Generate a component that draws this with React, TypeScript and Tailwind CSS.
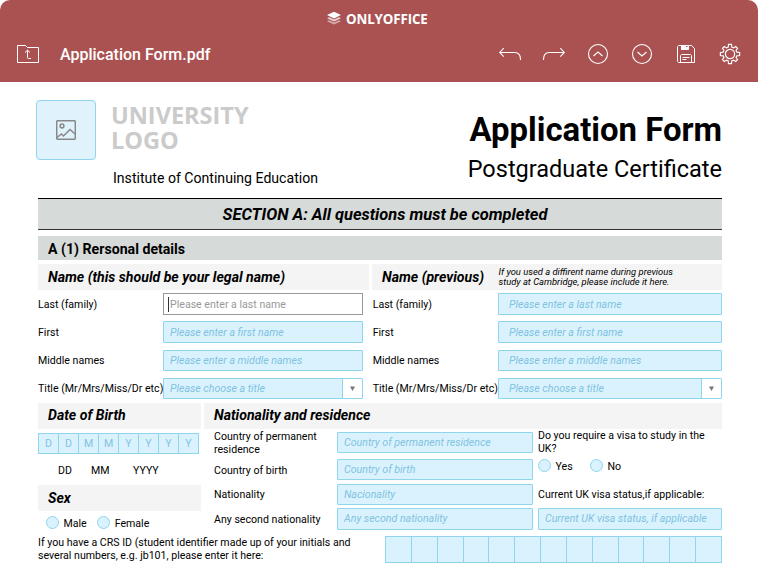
import React from "react";

const field = "border border-[#8fd5ec] bg-[#daf2fe] text-[#7fc3de] italic flex items-center whitespace-nowrap text-[10.6px] rounded-[1px]";

function Input({ text, className = "" }: { text: string; className?: string }) {
  return <div className={`${field} h-[21.5px] ${className}`}>{text}</div>;
}

function Select({ text, className = "" }: { text: string; className?: string }) {
  return (
    <div className={`${field} h-[21.5px] ${className}`}>
      <span>{text}</span>
      <span className="ml-auto flex h-full w-5 items-center justify-center border-l border-[#8fd5ec] bg-white">
        <svg width="5" height="5" viewBox="0 0 5 5"><path d="M0 .5h5L2.500 5z" fill="#777" /></svg>
      </span>
    </div>
  );
}

function Bar({ children, className = "" }: { children?: React.ReactNode; className?: string }) {
  return (
    <div className={`flex h-[26px] items-center bg-[#f4f4f4] pl-[10px] text-[14.1px] font-bold italic whitespace-nowrap ${className}`}>
      {children}
    </div>
  );
}

function Radio({ label, className = "" }: { label: string; className?: string }) {
  return (
    <div className={`flex items-center ${className}`}>
      <span className="h-[13px] w-[13px] rounded-full border border-[#8fd5ec] bg-[#daf2fe]" />
      <span className="ml-[4.5px] pt-px">{label}</span>
    </div>
  );
}

function Header() {
  return (
    <header className="h-[82px] rounded-t-[10px] bg-[#aa5252] text-white">
      <div className="flex h-[37px] items-center pl-[327px]">
        <svg width="14" height="15" viewBox="0 0 14 15" fill="#fff">
          <path opacity=".5" d="M0 10.200 2 9.300l5 2.200 5-2.200 2 .9-7 3.400z" />
          <path opacity=".75" d="M0 7.200l2-.9 5 2.200 5-2.200 2 .9-7 3.400z" />
          <path d="M7 .7l7 3.300-7 3.400L0 4z" />
        </svg>
        <span className="ml-[5px] pt-px font-['Open_Sans',sans-serif] text-[13.3px] font-bold tracking-[-0.1px]">ONLYOFFICE</span>
      </div>
      <div className="flex h-[34px] items-center">
        <svg className="ml-[17px]" width="22" height="20" viewBox="0 0 22 20" fill="none" stroke="#fff">
          <path d="M.5 1.500h8l2 2h11v15H.5zM8 8.500l2.500-2.300L13 8.500M10.500 6.200v7.300q0 1 1 1H14" />
        </svg>
        <span className="ml-[21px] text-[16px] font-medium">Application Form.pdf</span>
        <div className="ml-auto flex items-center gap-[22px] pr-[17px]">
          <svg width="22" height="22" viewBox="0 0 22 22" fill="none" stroke="#fff" strokeWidth="1.100">
            <path d="M4.700 5.200.7 9.500l4 4.200M.7 9.500H16c3.500 0 5.500 2.200 5.500 7.500" />
          </svg>
          <svg width="22" height="22" viewBox="0 0 22 22" fill="none" stroke="#fff" strokeWidth="1.100">
            <path d="M17.300 5.200l4 4.300-4 4.200M21.300 9.500H6C2.500 9.500.5 11.700.5 17" />
          </svg>
          <svg width="22" height="22" viewBox="0 0 22 22" fill="none" stroke="#fff" strokeWidth="1.100">
            <circle cx="11" cy="11" r="9.500" /><path d="M6.500 13 11 9l4.500 4" />
          </svg>
          <svg width="22" height="22" viewBox="0 0 22 22" fill="none" stroke="#fff" strokeWidth="1.100">
            <circle cx="11" cy="11" r="9.500" /><path d="M6.500 9l4.500 4 4.500-4" />
          </svg>
          <svg width="22" height="22" viewBox="0 0 22 22" fill="none" stroke="#fff">
            <path d="M3.500 2.500h13l3 3v14h-16l-1-1v-15zM5.500 19.500v-7l1-1h9l1 1v7M7.500 14.500h7M7.500 16.500h4M13.500 2.500v4" />
            <path d="M6 2h5v2h1.500V2h1v5H6z" fill="#fff" stroke="none" />
          </svg>
          <svg width="22" height="22" viewBox="0 0 22 22" fill="none" stroke="#fff" strokeWidth="1.200">
            <circle cx="11" cy="11" r="4.600" />
            <path d="M9.200 4.200 9.500 1.400h3l.3 2.800 1.700.7 2.200-1.400 1.800 1.800-1.400 2.200.7 1.700 2.800.3v3l-2.800.3-.7 1.700 1.400 2.200-1.800 1.800-2.200-1.400-1.700.7-.3 2.800h-3l-.3-2.800-1.700-.7-2.200 1.400-1.800-1.800 1.400-2.200-.7-1.700-2.800-.3v-3l2.800-.3.7-1.700-1.400-2.200 1.800-1.800 2.200 1.400z" />
          </svg>
        </div>
      </div>
    </header>
  );
}

function NameColumn({ first, gap, pad, width, label }: { first: React.ReactNode; gap: string; pad: string; width: string; label: string }) {
  const rows = ["First", "Middle names"];
  return (
    <div className={`flex flex-col gap-[6.8px] ${gap}`}>
      <div className="flex h-[21.5px] items-center"><span className={`${label} shrink-0 pt-px`}>Last (family)</span>{first}</div>
      {rows.map((r) => (
        <div key={r} className="flex h-[21.5px] items-center">
          <span className={`${label} shrink-0`}>{r}</span>
          <Input text={r === "First" ? "Please enter a first name" : "Please enter a middle names"} className={`${width} ${pad}`} />
        </div>
      ))}
      <div className="flex h-[21.5px] items-center">
        <span className={`${label} shrink-0 whitespace-nowrap`}>Title (Mr/Mrs/Miss/Dr etc)</span>
        <Select text="Please choose a title" className={`${width} ${pad}`} />
      </div>
    </div>
  );
}

export default function App() {
  return (
    <div className="h-[568px] w-[758px] overflow-hidden bg-white font-[Roboto,sans-serif] text-[10.6px] leading-[13px] text-black">
      <Header />
      <main className="pl-[38px]">
        <section className="-ml-[2px] flex h-[116px] w-[686px] pt-[18px]">
          <div className="flex h-[60px] w-[60px] items-center justify-center rounded-[4px] border border-[#8fd5ec] bg-[#e0f3fc]">
            <svg width="20" height="20" viewBox="0 0 20 20" fill="none" stroke="#888" strokeWidth="1.500">
              <rect x=".7" y=".7" width="18.600" height="18.600" rx="1" /><circle cx="6" cy="6" r="1.900" />
              <path d="M1 17.500 5.500 14l2 2L14 9.500l5 4.500" />
            </svg>
          </div>
          <div className="ml-[15px] pt-[2.5px]">
            <div className="font-['Open_Sans',sans-serif] text-[23.5px] leading-[25.5px] font-bold text-[#cbcbcb]">UNIVERSITY<br />LOGO</div>
            <div className="mt-[15.5px] ml-[2px] text-[14.1px] leading-[18px] whitespace-nowrap">Institute of Continuing Education</div>
          </div>
          <div className="ml-auto pt-[10px] text-right whitespace-nowrap">
            <div className="text-[32.9px] leading-[40px] font-bold">Application Form</div>
            <div className="text-[23.5px] leading-[38px]">Postgraduate Certificate</div>
          </div>
        </section>

        <div className="flex h-[32px] w-[684px] items-center justify-center border-t border-b border-t-black border-b-[#333] bg-[#d6dad9] pl-[10px] text-[16.45px] font-bold italic">
          SECTION A: All questions must be completed
        </div>
        <div className="mt-[6px] flex h-[24px] w-[684px] items-center bg-[#d6dad9] pt-[2px] pl-[10px] text-[14.15px] font-bold">A (1) Rersonal details</div>

        <div className="mt-[4px] flex w-[684px]">
          <Bar className="w-[331px]">Name (this should be your legal name)</Bar>
          <Bar className="ml-[3px] w-[350px]">
            <span className="w-[116.5px]">Name (previous)</span>
            <span className="text-[9.4px] leading-[10.5px] font-normal">If you used a diffirent name during previous<br />study at Cambridge, please include it here.</span>
          </Bar>
        </div>

        <div className="mt-[3px] flex">
          <NameColumn gap="" label="w-[125px]" width="w-[200px]" pad="pl-[6px]" first={
            <div className="flex h-[21.5px] w-[200px] items-center border border-[#999] pt-px pl-[4px] whitespace-nowrap text-[#999]">
              <span className="mr-[1px] h-[15px] w-px bg-[#333]" />Please enter a last name
            </div>} />
          <NameColumn gap="ml-[9.7px]" label="w-[125.3px]" width="w-[224px]" pad="pl-[10px]" first={<Input text="Please enter a last name" className="w-[224px] pt-px pl-[10px]" />} />
        </div>

        <div className="mt-[3.6px] flex w-[684px]">
          <div className="w-[163px]">
            <Bar>Date of Birth</Bar>
            <div className="mt-[4px] flex h-[21.5px] w-[161px] border border-[#8fd5ec] bg-[#daf2fe] text-[#7fc3de]">
              {"DDMMYYYY".split("").map((c, i) => (
                <span key={i} className="flex flex-1 items-center justify-center border-r border-[#8fd5ec] last:border-r-0">{c}</span>
              ))}
            </div>
            <div className="mt-[9.5px] flex h-[14px] items-center pl-[20px]">
              <span className="w-[33px]">DD</span><span className="w-[42px]">MM</span><span>YYYY</span>
            </div>
            <Bar className="mt-[7px] pt-px">Sex</Bar>
            <div className="mt-[5px] flex h-[14px] items-center pl-[8px]">
              <Radio label="Male" className="w-[51.2px]" /><Radio label="Female" />
            </div>
          </div>
          <div className="ml-[3px] w-[518px]">
            <Bar>Nationality and residence</Bar>
            <div className="flex pt-[1px] pl-[10px]">
              <div className="w-[123px] whitespace-nowrap">
                <div className="h-[26px]">Country of permanent<br />residence</div>
                <div className="mt-[7.8px]">Country of birth</div>
                <div className="mt-[11.5px]">Nationality</div>
                <div className="mt-[11.5px]">Any second nationality</div>
              </div>
              <div className="w-[195.5px] pt-[2px]">
                <Input text="Country of permanent residence" className="pl-[6px]" />
                <Input text="Country of birth" className="mt-[5.5px] pl-[6px]" />
                <Input text="Nacionality" className="mt-[3.3px] pl-[6px]" />
                <Input text="Any second nationality" className="mt-[2.8px] pl-[6px]" />
              </div>
              <div className="ml-[5.5px] w-[184px] whitespace-nowrap">
                <div className="-mt-[0.5px]">Do you require a visa to study in the<br />UK?</div>
                <div className="mt-[3.5px] flex h-[14px]"><Radio label="Yes" className="w-[52px]" /><Radio label="No" /></div>
                <div className="mt-[14.8px]">Current UK visa status,if applicable:</div>
                <Input text="Current UK visa status, if applicable" className="mt-[7.3px] pl-[6px]" />
              </div>
            </div>
          </div>
        </div>

        <div className="mt-[5.7px] flex w-[684px]">
          <div className="w-[347px] whitespace-nowrap">If you have a CRS ID (student identifier made up of your initials and<br />several numbers, e.g. jb101, please enter it here:</div>
          <div className="flex h-[27px] w-[337px] border border-[#8fd5ec] bg-[#daf2fe]">
            {Array.from({ length: 13 }, (_, i) => <span key={i} className="flex-1 border-r border-[#8fd5ec] last:border-r-0" />)}
          </div>
        </div>
      </main>
    </div>
  );
}
